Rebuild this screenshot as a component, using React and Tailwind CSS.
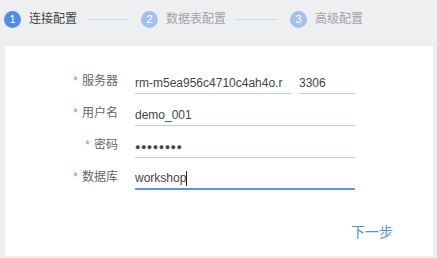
import React from 'react';

const font = { fontFamily: '"Liberation Sans", "Noto Sans CJK SC", sans-serif' };

function Step({ num, label, active }) {
  return (
    <div className="flex items-center">
      <div
        className={
          'w-[17px] h-[17px] rounded-full flex items-center justify-center text-white text-[11px] leading-none ' +
          (active ? 'bg-[#4f8ee6]' : 'bg-[#a3c0ee]')
        }
      >
        {num}
      </div>
      <span className={'ml-[8px] text-[12px] ' + (active ? 'text-[#444]' : 'text-[#a0a3a8]')}>{label}</span>
    </div>
  );
}

function Line() {
  return <div className="w-[41px] h-px bg-[#c9d7ee] ml-[10px] mr-[13px]" />;
}

function Row({ label, children }) {
  return (
    <div className="flex items-end h-[32px]">
      <div className="w-[113px] text-right text-[12px] text-[#666] pb-[4px]">
        <span className="text-[#e77] mr-[4px]">*</span>
        {label}
      </div>
      <div className="ml-[17px] flex items-end">{children}</div>
    </div>
  );
}

export default function App() {
  return (
    <div className="w-[437px] h-[258px] bg-[#eeeff1] overflow-hidden" style={font}>
      {/* Steps */}
      <div className="h-[46px] flex items-center pb-[8px] pl-[4px]">
        <Step num="1" label="连接配置" active />
        <Line />
        <Step num="2" label="数据表配置" />
        <Line />
        <Step num="3" label="高级配置" />
      </div>
      {/* Form panel */}
      <div className="ml-[5px] w-[428px] h-[210px] bg-white pt-[16px] flex flex-col">
        <Row label="服务器">
          <div className="w-[156px] h-[24px] border-b border-[#b9cdee] text-[12px] text-[#444] overflow-hidden whitespace-nowrap leading-[26px]">
            rm-m5ea956c4710c4ah4o.r
          </div>
          <div className="ml-[8px] w-[56px] h-[24px] border-b border-[#b9cdee] text-[12px] text-[#444] leading-[26px]">
            3306
          </div>
        </Row>
        <Row label="用户名">
          <div className="w-[220px] h-[24px] border-b border-[#b9cdee] text-[12px] text-[#444] leading-[26px]">
            demo_001
          </div>
        </Row>
        <Row label="密码">
          <div className="w-[220px] h-[24px] border-b border-[#b9cdee] text-[9px] text-[#444] leading-[26px] tracking-[0.5px]">
            ●●●●●●●●
          </div>
        </Row>
        <Row label="数据库">
          <div className="w-[220px] h-[24px] border-b-2 border-[#5b93e6] text-[12px] text-[#444] leading-[26px] flex items-center pt-[2px]">
            workshop
            <span className="inline-block w-px h-[15px] bg-[#222]" />
          </div>
        </Row>
        <div className="flex justify-end pr-[40px] mt-[32px]">
          <span className="text-[14px] text-[#4f8ee6]">下一步</span>
        </div>
      </div>
    </div>
  );
}
